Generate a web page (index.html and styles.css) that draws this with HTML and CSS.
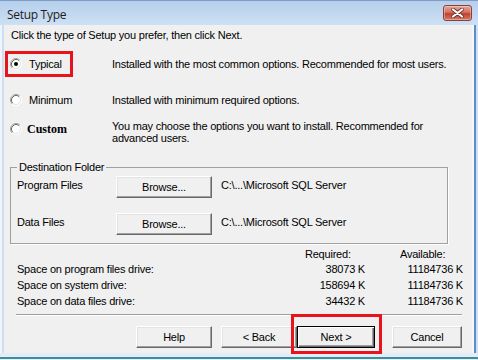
FILE: index.html
```html
<!DOCTYPE html>
<html>
<head>
<meta charset="utf-8">
<link rel="stylesheet" href="styles.css">
</head>
<body>
<div class="window">
  <div class="titlebar">
    <span class="title">Setup Type</span>
    <span class="close">
      <svg width="13" height="10" viewBox="0 0 13 10"><path d="M2 1.5 L11 8.5 M11 1.5 L2 8.5" stroke="#6b2a22" stroke-width="3.6" stroke-linecap="round"/><path d="M2 1.5 L11 8.5 M11 1.5 L2 8.5" stroke="#fff" stroke-width="2.2" stroke-linecap="round"/></svg>
    </span>
  </div>
  <div class="client">
    <div class="intro">Click the type of Setup you prefer, then click Next.</div>

    <div class="opt opt1">
      <div class="choice hl">
        <svg class="radio" width="12" height="12" viewBox="0 0 12 12"><circle cx="6" cy="6" r="5" fill="#fff"/><path d="M2.11 9.89 A5.5 5.5 0 0 1 9.89 2.11" stroke="#a0a0a0" fill="none"/><path d="M9.89 2.11 A5.5 5.5 0 0 1 2.11 9.89" stroke="#fff" fill="none"/><path d="M2.82 9.18 A4.5 4.5 0 0 1 9.18 2.82" stroke="#696969" fill="none"/><path d="M9.18 2.82 A4.5 4.5 0 0 1 2.82 9.18" stroke="#e3e3e3" fill="none"/><circle cx="6" cy="6" r="2" fill="#000"/></svg>
        <span>Typical</span>
      </div>
      <div class="desc">Installed with the most common options. Recommended for most users.</div>
    </div>

    <div class="opt opt2">
      <div class="choice">
        <svg class="radio" width="12" height="12" viewBox="0 0 12 12"><circle cx="6" cy="6" r="5" fill="#fff"/><path d="M2.11 9.89 A5.5 5.5 0 0 1 9.89 2.11" stroke="#a0a0a0" fill="none"/><path d="M9.89 2.11 A5.5 5.5 0 0 1 2.11 9.89" stroke="#fff" fill="none"/><path d="M2.82 9.18 A4.5 4.5 0 0 1 9.18 2.82" stroke="#696969" fill="none"/><path d="M9.18 2.82 A4.5 4.5 0 0 1 2.82 9.18" stroke="#e3e3e3" fill="none"/></svg>
        <span>Minimum</span>
      </div>
      <div class="desc">Installed with minimum required options.</div>
    </div>

    <div class="opt opt3">
      <div class="choice custom">
        <svg class="radio" width="12" height="12" viewBox="0 0 12 12"><circle cx="6" cy="6" r="5" fill="#fff"/><path d="M2.11 9.89 A5.5 5.5 0 0 1 9.89 2.11" stroke="#a0a0a0" fill="none"/><path d="M9.89 2.11 A5.5 5.5 0 0 1 2.11 9.89" stroke="#fff" fill="none"/><path d="M2.82 9.18 A4.5 4.5 0 0 1 9.18 2.82" stroke="#696969" fill="none"/><path d="M9.18 2.82 A4.5 4.5 0 0 1 2.82 9.18" stroke="#e3e3e3" fill="none"/></svg>
        <span>Custom</span>
      </div>
      <div class="desc two">You may choose the options you want to install. Recommended for<br>advanced users.</div>
    </div>

    <fieldset class="dest">
      <legend>Destination Folder</legend>
      <div class="frow">
        <span class="flabel">Program Files</span>
        <button class="btn browse">Browse...</button>
        <span class="fpath">C:\...\Microsoft SQL Server</span>
      </div>
      <div class="frow">
        <span class="flabel">Data Files</span>
        <button class="btn browse">Browse...</button>
        <span class="fpath">C:\...\Microsoft SQL Server</span>
      </div>
    </fieldset>

    <div class="space">
      <span class="hd"></span>
      <span class="hd req">Required:</span>
      <span class="hd avail">Available:</span>

      <span class="cell">Space on program files drive:</span>
      <span class="cell num">38073 K</span>
      <span class="cell num">11184736 K</span>

      <span class="cell">Space on system drive:</span>
      <span class="cell num">158694 K</span>
      <span class="cell num">11184736 K</span>

      <span class="cell">Space on data files drive:</span>
      <span class="cell num">34432 K</span>
      <span class="cell num">11184736 K</span>
    </div>

    <div class="sep"></div>

    <div class="buttons">
      <button class="btn help">Help</button>
      <button class="btn back">&lt; Back</button>
      <span class="next-wrap">
        <button class="btn next">Next &gt;</button>
        <span class="mark"></span>
      </span>
      <button class="btn cancel">Cancel</button>
    </div>
  </div>
  <div class="bottom"></div>
</div>
</body>
</html>
```
FILE: styles.css
```css
html, body {
  margin: 0;
  padding: 0;
}
body {
  width: 478px;
  height: 360px;
  overflow: hidden;
  background: #d9e6f5;
  font: 11px "Liberation Sans", Arial, sans-serif;
  letter-spacing: -0.22px;
  color: #000;
}
.window {
  height: 360px;
  display: flex;
  flex-direction: column;
  border-top: 1px solid #7e9cc4;
  box-sizing: border-box;
  background: linear-gradient(to right, #eef4fb 0, #eef4fb 2px, #cfdff1 2px);
}
.titlebar {
  height: 24px;
  flex: none;
  display: flex;
  align-items: center;
  justify-content: space-between;
  padding: 0 6px 0 7px;
  background: linear-gradient(#b6cfec, #cde0f4);
}
.title {
  font: 12px "Open Sans", "Noto Sans", sans-serif;
  color: #1c1c1c;
  padding-top: 2px;
  letter-spacing: -0.3px;
}
.close {
  width: 29px;
  height: 16px;
  box-sizing: border-box;
  border: 1px solid #8a3d36;
  border-radius: 3px;
  background: linear-gradient(#e6a796, #d27262 45%, #c0412f 55%, #d47a63);
  display: flex;
  align-items: center;
  justify-content: center;
  box-shadow: inset 0 0 0 1px rgba(255,255,255,0.35);
}
.client {
  height: 328px;
  flex: none;
  margin: 0 6px 0 4px;
  background: #f0f0f0;
  display: flex;
  flex-direction: column;
  box-shadow: 2px 0 0 #f3f7fc, 4px 0 0 #5d8fc6;
}
.bottom {
  flex: 1;
  border-bottom: 1px solid #e8eef6;
  background: linear-gradient(#e4ecf6 0, #e4ecf6 4px, #3a8f9c 4px, #3a8f9c 6px);
}
.intro {
  padding: 3px 0 0 7px;
  line-height: 14px;
}
.opt {
  display: flex;
  margin-left: 1px;
}
.opt1 {
  margin-top: 9px;
  align-items: center;
}
.opt2 {
  margin-top: 10px;
  align-items: center;
}
.opt3 {
  margin-top: 3px;
  align-items: flex-start;
}
.choice {
  width: 68px;
  height: 26px;
  flex: none;
  box-sizing: border-box;
  border: 3px solid transparent;
  display: flex;
  align-items: center;
  padding-left: 2px;
  gap: 7px;
}
.choice.hl {
  border-color: #e8141c;
}
.choice.custom {
  gap: 5px;
}
.choice.custom span {
  font: bold 12px "Liberation Serif", "Times New Roman", serif;
  letter-spacing: 0;
}
.radio {
  flex: none;
}
.desc {
  margin-left: 39px;
  line-height: 14px;
}
.desc.two {
  line-height: 12px;
  margin-top: 4px;
}
.dest {
  margin: 16px 24px 0 6px;
  padding: 2px 8px 8px 6px;
  border: 1px solid #a0a0a0;
  box-shadow: 1px 1px 0 #fff;
  min-width: 0;
}
.dest legend {
  padding: 0 2px;
  line-height: 14px;
}
.frow {
  display: flex;
  align-items: center;
  height: 22px;
}
.frow + .frow {
  margin-top: 15px;
}
.flabel {
  width: 99px;
  flex: none;
  padding-bottom: 4px;
}
.fpath {
  margin-left: 9px;
  padding-bottom: 4px;
}
.btn {
  box-sizing: border-box;
  height: 22px;
  padding: 0;
  margin: 0;
  background: #f0f0f0;
  border: 1px solid;
  border-color: #fff #696969 #696969 #fff;
  box-shadow: inset -1px -1px 0 #a0a0a0, inset 1px 1px 0 #e3e3e3;
  font: 11px "Liberation Sans", Arial, sans-serif;
  letter-spacing: -0.22px;
  color: #000;
  flex: none;
}
.browse {
  width: 96px;
}
.space {
  display: grid;
  grid-template-columns: 1fr 65px 98px;
  margin: 4px 9px 0 13px;
}
.hd {
  line-height: 13px;
}
.hd.req {
  padding-left: 5px;
}
.hd.avail {
  padding-left: 35px;
}
.cell {
  line-height: 16px;
  white-space: nowrap;
}
.num {
  text-align: right;
}
.sep {
  margin: 5px 10px 0 12px;
  border-top: 1px solid #a0a0a0;
  border-bottom: 1px solid #fff;
}
.buttons {
  display: flex;
  margin-top: 10px;
  padding-left: 132px;
}
.help {
  width: 76px;
  margin-right: 9px;
}
.back {
  width: 76px;
}
.next-wrap {
  position: relative;
  display: flex;
}
.next {
  width: 78px;
  border: 1px solid #000;
  box-shadow: inset 1px 1px 0 #fff, inset -1px -1px 0 #696969, inset -2px -2px 0 #a0a0a0;
}
.mark {
  position: absolute;
  left: -6px;
  right: -7px;
  top: -12px;
  bottom: -6px;
  border: 3px solid #e8141c;
}
.cancel {
  width: 70px;
  margin-left: 17px;
}
```
